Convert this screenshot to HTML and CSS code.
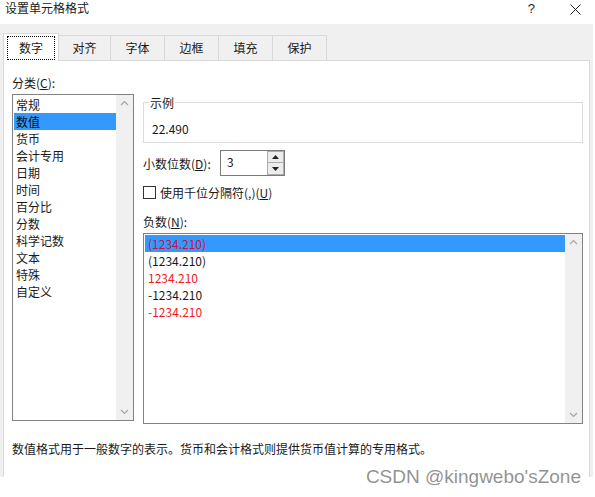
FILE: index.html
```html
<!DOCTYPE html>
<html lang="zh-CN">
<head>
<meta charset="utf-8">
<title>设置单元格格式</title>
<link rel="stylesheet" href="styles.css">
</head>
<body>
<div class="window">
  <div class="titlebar">
    <span class="title">设置单元格格式</span>
    <div class="tb-buttons">
      <span class="help">?</span>
      <svg class="close" width="11" height="11" viewBox="0 0 11 11"><path d="M0.5 0.5 L10.5 10.5 M10.5 0.5 L0.5 10.5" stroke="#222" stroke-width="1" fill="none"/></svg>
    </div>
  </div>
  <div class="dialog">
    <div class="tabs">
      <div class="tab active"><span class="focus">数字</span></div>
      <div class="tab w52">对齐</div>
      <div class="tab">字体</div>
      <div class="tab">边框</div>
      <div class="tab">填充</div>
      <div class="tab">保护</div>
    </div>
    <div class="panel">
      <div class="content">
        <div class="left">
          <div class="label">分类(<u>C</u>):</div>
          <div class="listbox cat">
            <ul class="items">
              <li>常规</li>
              <li class="sel">数值</li>
              <li>货币</li>
              <li>会计专用</li>
              <li>日期</li>
              <li>时间</li>
              <li>百分比</li>
              <li>分数</li>
              <li>科学记数</li>
              <li>文本</li>
              <li>特殊</li>
              <li>自定义</li>
            </ul>
            <div class="scrollbar">
              <svg class="chev" width="17" height="17" viewBox="0 0 17 17"><path d="M5 10 L8.5 6.5 L12 10" stroke="#a6a6a6" stroke-width="1.2" fill="none"/></svg>
              <svg class="chev" width="17" height="17" viewBox="0 0 17 17"><path d="M5 7 L8.5 10.5 L12 7" stroke="#a6a6a6" stroke-width="1.2" fill="none"/></svg>
            </div>
          </div>
        </div>
        <div class="right">
          <fieldset class="sample">
            <legend>示例</legend>
            <div class="sample-value">22.490</div>
          </fieldset>
          <div class="decimals">
            <span class="dec-label">小数位数(<u>D</u>):</span>
            <div class="spin">
              <span class="spin-value">3</span>
              <div class="spin-btns">
                <div class="spin-btn"><svg width="7" height="4" viewBox="0 0 7 4"><path d="M0 4 L3.5 0 L7 4 Z" fill="#222"/></svg></div>
                <div class="spin-btn"><svg width="7" height="4" viewBox="0 0 7 4"><path d="M0 0 L3.5 4 L7 0 Z" fill="#222"/></svg></div>
              </div>
            </div>
          </div>
          <div class="check">
            <span class="box"></span>
            <span class="check-label">使用千位分隔符(,)(<u>U</u>)</span>
          </div>
          <div class="label neg-label">负数(<u>N</u>):</div>
          <div class="listbox neg">
            <ul class="items">
              <li class="sel red-sel">(1234.210)</li>
              <li>(1234.210)</li>
              <li class="red">1234.210</li>
              <li>-1234.210</li>
              <li class="red">-1234.210</li>
            </ul>
            <div class="scrollbar">
              <svg class="chev" width="17" height="17" viewBox="0 0 17 17"><path d="M5 10 L8.5 6.5 L12 10" stroke="#a6a6a6" stroke-width="1.2" fill="none"/></svg>
              <svg class="chev" width="17" height="17" viewBox="0 0 17 17"><path d="M5 7 L8.5 10.5 L12 7" stroke="#a6a6a6" stroke-width="1.2" fill="none"/></svg>
            </div>
          </div>
        </div>
      </div>
      <p class="desc">数值格式用于一般数字的表示。货币和会计格式则提供货币值计算的专用格式。</p>
    </div>
  </div>
  <div class="watermark">CSDN @kingwebo'sZone</div>
</div>
</body>
</html>
```

FILE: styles.css
```css
* { box-sizing: border-box; }
html, body { margin: 0; padding: 0; background: #ffffff; }
body {
  font-family: "Noto Sans CJK SC", "Noto Sans", sans-serif;
  font-size: 12px;
  color: #1a1a1a;
  width: 595px;
  height: 497px;
  overflow: hidden;
}
.window { position: relative; width: 595px; height: 497px; }

.titlebar {
  height: 24px;
  display: flex;
  justify-content: space-between;
  align-items: flex-start;
  padding-left: 5px;
  background: #ffffff;
}
.title { line-height: 16px; }
.tb-buttons { display: flex; align-items: flex-start; padding-top: 3px; }
.help {
  font-family: "Liberation Sans", sans-serif;
  font-size: 13px;
  line-height: 12px;
  margin-right: 35px;
  color: #222;
}
.close { margin-top: 1px; margin-right: 14px; }

.dialog {
  width: 593px;
  height: 453px;
  background: #f0f0f0;
  padding: 9px 0 0 3px;
  overflow: hidden;
}
.tabs {
  display: flex;
  align-items: flex-end;
  height: 27px;
}
.tab {
  width: 54px;
  height: 25px;
  border-top: 1px solid #d9d9d9;
  border-right: 1px solid #d9d9d9;
  background: #f0f0f0;
  text-align: center;
  line-height: 24px;
}
.tab.w52 { width: 52px; }
.tab.active {
  width: 56px;
  height: 28px;
  margin-bottom: -1px;
  border: 1px solid #d9d9d9;
  border-bottom: none;
  background: #ffffff;
  position: relative;
  z-index: 1;
  padding: 2px 0 0 3px;
}
.focus {
  display: block;
  width: 48px;
  height: 24px;
  border: 1px dotted #000;
  line-height: 22px;
  text-align: center;
}

.panel {
  width: 587px;
  height: 460px;
  background: #ffffff;
  border: 1px solid #d9d9d9;
  padding: 13px 6px 0 8px;
}
.content { display: flex; align-items: flex-start; gap: 9px; }
.left { width: 122px; }
.right { width: 440px; }
.label { line-height: 17px; height: 17px; margin-bottom: 3px; }

.listbox {
  display: flex;
  border: 1px solid #828282;
  background: #fff;
}
.listbox.cat { height: 327px; }
.listbox.neg { height: 191px; }
.items {
  list-style: none;
  margin: 0;
  padding: 1px 0 0 1px;
  flex: 1;
}
.items li { height: 17px; line-height: 17px; padding-left: 2px; white-space: nowrap; }
.neg .items li { padding-left: 3px; }
.items li.sel { background: #3399ff; color: #0c0c0c; }
.items li.red { color: #f21b1b; }
.items li.red-sel { color: #c4163f; }
.scrollbar {
  width: 17px;
  background: #f0f0f0;
  display: flex;
  flex-direction: column;
  justify-content: space-between;
}
.chev { display: block; }

.sample {
  margin: 21px 0 0 0;
  padding: 0;
  border: 1px solid #dcdcdc;
  min-width: 0;
}
.sample legend {
  padding: 0 1px;
  margin-left: 5px;
  line-height: 15px;
}
.sample-value { padding: 10px 0 5px 8px; line-height: 17px; }

.decimals { display: flex; align-items: center; margin-top: 7px; height: 26px; }
.dec-label { width: 77px; }
.spin {
  width: 65px;
  height: 26px;
  border: 1px solid #7a7a7a;
  display: flex;
  justify-content: space-between;
  padding: 0 0 0 6px;
}
.spin-value { line-height: 22px; }
.spin-btns { display: flex; flex-direction: column; padding: 0 0 0 0; }
.spin-btn {
  width: 17px;
  height: 12px;
  border: 1px solid #acacac;
  background: #ececec;
  display: flex;
  align-items: center;
  justify-content: center;
}
.spin-btn + .spin-btn { border-top: none; height: 12px; }

.check { display: flex; align-items: center; margin-top: 10px; height: 13px; }
.box {
  width: 13px;
  height: 13px;
  border: 1px solid #333;
  background: #fff;
  margin-right: 4px;
}
.check-label { line-height: 13px; }
.neg-label { margin-top: 14px; }

.desc { margin: 16px 0 0 0; line-height: 17px; }

.watermark {
  position: absolute;
  right: 14px;
  top: 467px;
  font-family: "Liberation Sans", sans-serif;
  font-size: 19px;
  line-height: 19px;
  color: rgba(110, 110, 110, 0.75);
  white-space: nowrap;
}
```
